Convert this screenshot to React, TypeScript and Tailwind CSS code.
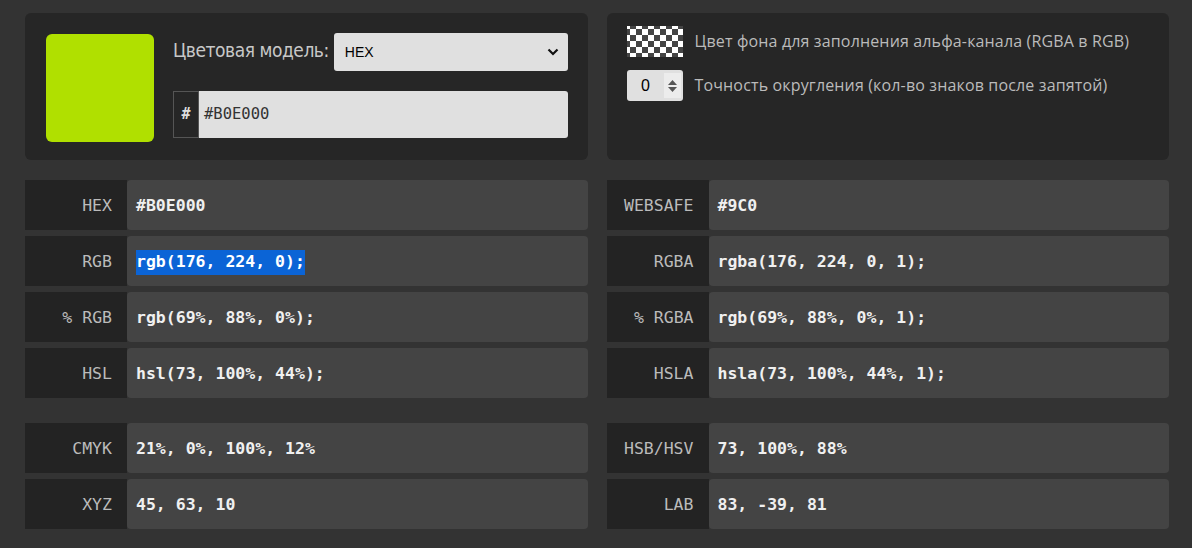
import React from 'react'

const left = [
  [
    { label: 'HEX', value: '#B0E000' },
    { label: 'RGB', value: 'rgb(176, 224, 0);', selected: true },
    { label: '% RGB', value: 'rgb(69%, 88%, 0%);' },
    { label: 'HSL', value: 'hsl(73, 100%, 44%);' },
  ],
  [
    { label: 'CMYK', value: '21%, 0%, 100%, 12%' },
    { label: 'XYZ', value: '45, 63, 10' },
  ],
]

const right = [
  [
    { label: 'WEBSAFE', value: '#9C0' },
    { label: 'RGBA', value: 'rgba(176, 224, 0, 1);' },
    { label: '% RGBA', value: 'rgb(69%, 88%, 0%, 1);' },
    { label: 'HSLA', value: 'hsla(73, 100%, 44%, 1);' },
  ],
  [
    { label: 'HSB/HSV', value: '73, 100%, 88%' },
    { label: 'LAB', value: '83, -39, 81' },
  ],
]

type Row = { label: string; value: string; selected?: boolean }

function ValueRow({ row }: { row: Row }) {
  return (
    <div className="flex h-[50px]">
      <div className="w-[102px] shrink-0 bg-[#232323] flex items-center justify-end pr-[15px] pt-[3px] text-[16.5px] text-[#bbbbbb] font-['DejaVu_Sans_Mono',monospace]">
        {row.label}
      </div>
      <div className="flex-1 bg-[#444444] rounded-[4px] flex items-center pl-[9px] pt-[3px] text-[16.5px] font-bold text-[#f0f0f0] font-['DejaVu_Sans_Mono',monospace]">
        {row.selected ? (
          <span className="bg-[#0b64d6] text-white">{row.value}</span>
        ) : (
          row.value
        )}
      </div>
    </div>
  )
}

function Column({ groups }: { groups: Row[][] }) {
  return (
    <div className="flex flex-col gap-[25px]">
      {groups.map((g, i) => (
        <div key={i} className="flex flex-col gap-[6px]">
          {g.map((r) => (
            <ValueRow key={r.label} row={r} />
          ))}
        </div>
      ))}
    </div>
  )
}

export default function App() {
  return (
    <div className="min-h-[548px] bg-[#333333] pl-[25px] pt-[13px] pb-[19px] font-['Open_Sans',sans-serif]">
      <div className="w-[1144px] grid grid-cols-2 gap-x-[19px] gap-y-[20px]">
        {/* color picker */}
        <div className="h-[147px] bg-[#262626] rounded-[6px] flex p-[21px] pr-[20px] gap-[19px]">
          <div className="w-[108px] h-[108px] rounded-[6px] bg-[#B0E000] shrink-0" />
          <div className="flex-1 flex flex-col gap-[20px] -mt-[1px]">
            <div className="flex items-center gap-[5px]">
              <span className="text-[19px] text-[#c8c8c8] font-['DejaVu_Sans_Condensed','DejaVu_Sans',sans-serif] tracking-[-0.45px] -mt-[3px]">
                Цветовая модель:
              </span>
              <div className="flex-1 h-[38px] bg-[#e0e0e0] rounded-[3px] flex items-center justify-between pl-[11px] pr-[9px] text-[14px] text-black font-['Liberation_Sans',sans-serif]">
                <span>HEX</span>
                <svg width="12" height="8" viewBox="0 0 12 8" fill="none">
                  <path d="M1.5 1.5 L6 6 L10.5 1.5" stroke="#111" strokeWidth="2.2" />
                </svg>
              </div>
            </div>
            <div className="flex h-[47px]">
              <div className="w-[26px] border border-[#555555] flex items-center justify-center text-[15px] font-bold text-[#dddddd] font-['DejaVu_Sans_Mono',monospace]">
                #
              </div>
              <div className="flex-1 bg-[#e0e0e0] rounded-r-[3px] flex items-center pl-[5px] text-[15.5px] text-[#333333] font-['DejaVu_Sans_Mono',monospace]">
                #B0E000
              </div>
            </div>
          </div>
        </div>

        {/* options */}
        <div className="h-[147px] bg-[#262626] rounded-[6px] pl-[20px] pt-[13px] flex flex-col gap-[13px]">
          <div className="flex items-center gap-[12px]">
            <div className="w-[56px] h-[31px] bg-[conic-gradient(#444444_0deg_90deg,#ffffff_90deg_180deg,#444444_180deg_270deg,#ffffff_270deg_360deg)] bg-[length:12px_12px] bg-[position:-3px_-3px]" />
            <span className="text-[16px] tracking-[0.15px] text-[#bbbbbb] -mt-[2px]">
              Цвет фона для заполнения альфа-канала (RGBA в RGB)
            </span>
          </div>
          <div className="flex items-center gap-[12px]">
            <div className="w-[56px] h-[31px] bg-[#e0e0e0] rounded-[3px] flex items-center overflow-hidden">
              <span className="flex-1 text-center pl-[1px] text-[16px] text-black font-['Liberation_Sans',sans-serif]">0</span>
              <div className="w-[17px] h-[25px] mr-[2px] bg-[#ececec] flex flex-col items-center justify-center gap-[2px]">
                <svg width="9" height="5" viewBox="0 0 9 5">
                  <path d="M0 5 L4.5 0 L9 5 Z" fill="#555" />
                </svg>
                <svg width="9" height="5" viewBox="0 0 9 5">
                  <path d="M0 0 L4.5 5 L9 0 Z" fill="#555" />
                </svg>
              </div>
            </div>
            <span className="text-[16px] tracking-[0.15px] text-[#bbbbbb] -mt-[2px]">
              Точность округления (кол-во знаков после запятой)
            </span>
          </div>
        </div>

        <Column groups={left} />
        <Column groups={right} />
      </div>
    </div>
  )
}
